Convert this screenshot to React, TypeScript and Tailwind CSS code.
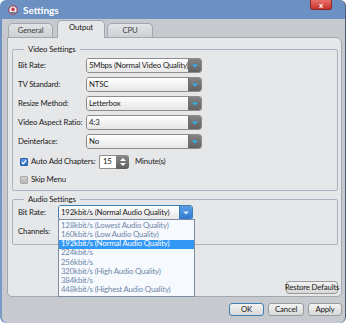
import React from "react";

const bitRates = [
  "128kbit/s (Lowest Audio Quality)",
  "160kbit/s (Low Audio Quality)",
  "192kbit/s (Normal Audio Quality)",
  "224kbit/s",
  "256kbit/s",
  "320kbit/s (High Audio Quality)",
  "384kbit/s",
  "448kbit/s (Highest Audio Quality)",
];

function Arrow({ color }: { color: string }) {
  return (
    <svg width="6" height="4" viewBox="0 0 6 4">
      <path d="M0 0.5 L6 0.5 L3 3.5 Z" fill={color} />
    </svg>
  );
}

function Select({ value, width, focused }: { value: string; width: string; focused?: boolean }) {
  return (
    <div
      className={`${width} h-[15px] flex rounded-[3px] border overflow-hidden ${
        focused ? "border-[#3c7fb1]" : "border-[#8c8c8c]"
      }`}
    >
      <div className="flex-1 flex items-center pl-[2px] bg-gradient-to-b from-[#ffffff] to-[#e6e6e6] whitespace-nowrap overflow-hidden">
        {value}
      </div>
      <div
        className={`w-[13px] flex items-center justify-center border-l ${
          focused
            ? "bg-gradient-to-b from-[#5aa0e8] to-[#2f78d0] border-[#3c7fb1]"
            : "bg-gradient-to-b from-[#848484] to-[#626262] border-[#707070]"
        }`}
      >
        <Arrow color={focused ? "#d8ecff" : "#2db4f0"} />
      </div>
    </div>
  );
}

function Row({ label, value }: { label: string; value: string }) {
  return (
    <div className="flex items-center h-[15px]">
      <span className="w-[68px] whitespace-nowrap">{label}</span>
      <Select value={value} width="w-[116px]" />
    </div>
  );
}

function Group({ title, className, children }: { title: string; className: string; children: React.ReactNode }) {
  return (
    <div className={`relative border border-[#a9b3c1] rounded-[2px] ${className}`}>
      <span className="absolute -top-[6px] left-[11px] px-[4px] bg-[#e6e7e9] leading-[10px] whitespace-nowrap">{title}</span>
      {children}
    </div>
  );
}

function Button({ label, className }: { label: string; className: string }) {
  return (
    <div
      className={`h-[13px] flex items-center justify-center rounded-[3px] border bg-gradient-to-b from-[#f4f4f4] to-[#d8d8d8] whitespace-nowrap ${className}`}
    >
      {label}
    </div>
  );
}

export default function App() {
  return (
    <div className="w-[350px] h-[323px] bg-white font-['Lato',sans-serif] text-[7.8px] tracking-[-0.15px] text-[#1a1a1a] leading-none">
      <div className="w-[346px] h-[323px] rounded-t-[6px] rounded-b-[6px] bg-gradient-to-b from-[#6c90c2] to-[#7b9bc6] border-r border-[#4e5d73] flex flex-col">
        <div className="h-[19px] flex items-center pl-[8px]">
          <svg width="10" height="10" viewBox="0 0 10 10">
            <circle cx="5" cy="5" r="4.2" fill="#eceff4" stroke="#9a2a3a" strokeWidth="1" />
            <circle cx="5" cy="4.4" r="1.8" fill="#c24055" />
            <rect x="2.5" y="7" width="5" height="1.5" fill="#6a6f78" />
          </svg>
          <span className="ml-[5px] text-white font-bold text-[10px] tracking-normal">Settings</span>
          <div className="ml-auto mr-[13px] self-start w-[22px] h-[10px] rounded-b-[3px] bg-gradient-to-b from-[#e8706a] to-[#c8302a] border border-[#8a2a25] border-t-0 flex items-center justify-center text-white font-bold text-[8px]">
            x
          </div>
        </div>
        <div className="flex-1 ml-[2px] bg-[#c6c9ce] rounded-b-[6px] flex flex-col pl-[5px] pr-[3px]">
          <div className="h-[18px] flex items-end">
            <div className="ml-[1px] w-[45px] h-[14px] rounded-t-[5px] border border-b-0 border-[#a3a8b0] bg-gradient-to-b from-[#e2e4e7] to-[#ccd0d4] flex items-center justify-center text-[#404040]">
              General
            </div>
            <div className="ml-[4px] w-[48px] h-[18px] rounded-t-[5px] border border-b-0 border-[#a3a8b0] bg-[#e6e7e9] flex items-start pt-[3px] justify-center relative z-10 -mb-[1px]">
              Output
            </div>
            <div className="ml-[2px] w-[46px] h-[14px] rounded-t-[5px] border border-b-0 border-[#a3a8b0] bg-gradient-to-b from-[#e2e4e7] to-[#ccd0d4] flex items-center justify-center text-[#404040]">
              CPU
            </div>
          </div>
          <div className="h-[260px] bg-[#e6e7e9] border border-[#a3a8b0] rounded-b-[5px] rounded-tr-[6px] flex flex-col">
            <Group title="Video Settings" className="mt-[11px] ml-[4px] mr-[3px] h-[142px] pt-[8px] pl-[5px] flex flex-col">
              <div className="flex flex-col gap-[4px]">
                <Row label="Bit Rate:" value="5Mbps (Normal Video Quality)" />
                <Row label="TV Standard:" value="NTSC" />
                <Row label="Resize Method:" value="Letterbox" />
                <Row label="Video Aspect Ratio:" value="4:3" />
                <Row label="Deinterlace:" value="No" />
              </div>
              <div className="mt-[6px] h-[14px] flex items-center pl-[2px]">
                <div className="w-[8px] h-[8px] rounded-[1px] bg-gradient-to-b from-[#5a9ae8] to-[#2e6fc8] border border-[#2a5ea8] flex items-center justify-center">
                  <svg width="6" height="6" viewBox="0 0 6 6">
                    <path d="M0.8 3.2 L2.4 4.8 L5.2 1.2" stroke="white" strokeWidth="1.3" fill="none" />
                  </svg>
                </div>
                <span className="ml-[3px] w-[68px] whitespace-nowrap">Auto Add Chapters:</span>
                <div className="w-[17px] h-[14px] bg-white border border-[#8c8c8c] border-r-0 rounded-l-[2px] flex items-center pl-[3px]">
                  15
                </div>
                <div className="w-[13px] h-[14px] rounded-r-[3px] bg-gradient-to-b from-[#8a8a8a] to-[#5e5e5e] flex flex-col items-center justify-center gap-[2px]">
                  <svg width="6" height="3" viewBox="0 0 6 3">
                    <path d="M0 3 L6 3 L3 0 Z" fill="white" />
                  </svg>
                  <svg width="6" height="3" viewBox="0 0 6 3">
                    <path d="M0 0 L6 0 L3 3 Z" fill="white" />
                  </svg>
                </div>
                <span className="ml-[6px]">Minute(s)</span>
              </div>
              <div className="mt-[4px] h-[14px] flex items-center pl-[2px]">
                <div className="w-[8px] h-[8px] rounded-[1px] bg-gradient-to-b from-[#d2d2d2] to-[#b4b4b4] border border-[#a8a8a8]" />
                <span className="ml-[3px]">Skip Menu</span>
              </div>
            </Group>
            <Group title="Audio Settings" className="mt-[8px] ml-[4px] mr-[3px] h-[46px] pt-[5px] pl-[5px] flex flex-col gap-[4px]">
              <div className="flex items-center h-[15px]">
                <span className="w-[40px]">Bit Rate:</span>
                <div className="relative">
                  <Select value="192kbit/s (Normal Audio Quality)" width="w-[135px]" focused />
                  <div className="absolute top-[14px] left-0 w-[137px] h-[78px] bg-[#f6f9fd] border border-[#7d8ea2] z-20 flex flex-col py-[1px]">
                    {bitRates.map((r, i) => (
                      <div
                        key={r}
                        className={`h-[9.5px] flex items-center pl-[2px] whitespace-nowrap ${
                          i === 2 ? "bg-[#3297f5] text-white" : "text-[#6e86a8]"
                        }`}
                      >
                        {r}
                      </div>
                    ))}
                  </div>
                </div>
              </div>
              <div className="flex items-center h-[15px]">
                <span>Channels:</span>
              </div>
            </Group>
            <div className="mt-auto self-end mr-[3px] mb-[2px]">
              <Button label="Restore Defaults" className="w-[52px] border-[#9a9a9a]" />
            </div>
          </div>
          <div className="mt-[6px] flex justify-end gap-[4px]">
            <Button label="OK" className="w-[35px] border-[#3c7fb1]" />
            <Button label="Cancel" className="w-[36px] border-[#9a9a9a]" />
            <Button label="Apply" className="w-[34px] border-[#9a9a9a]" />
          </div>
        </div>
      </div>
    </div>
  );
}
